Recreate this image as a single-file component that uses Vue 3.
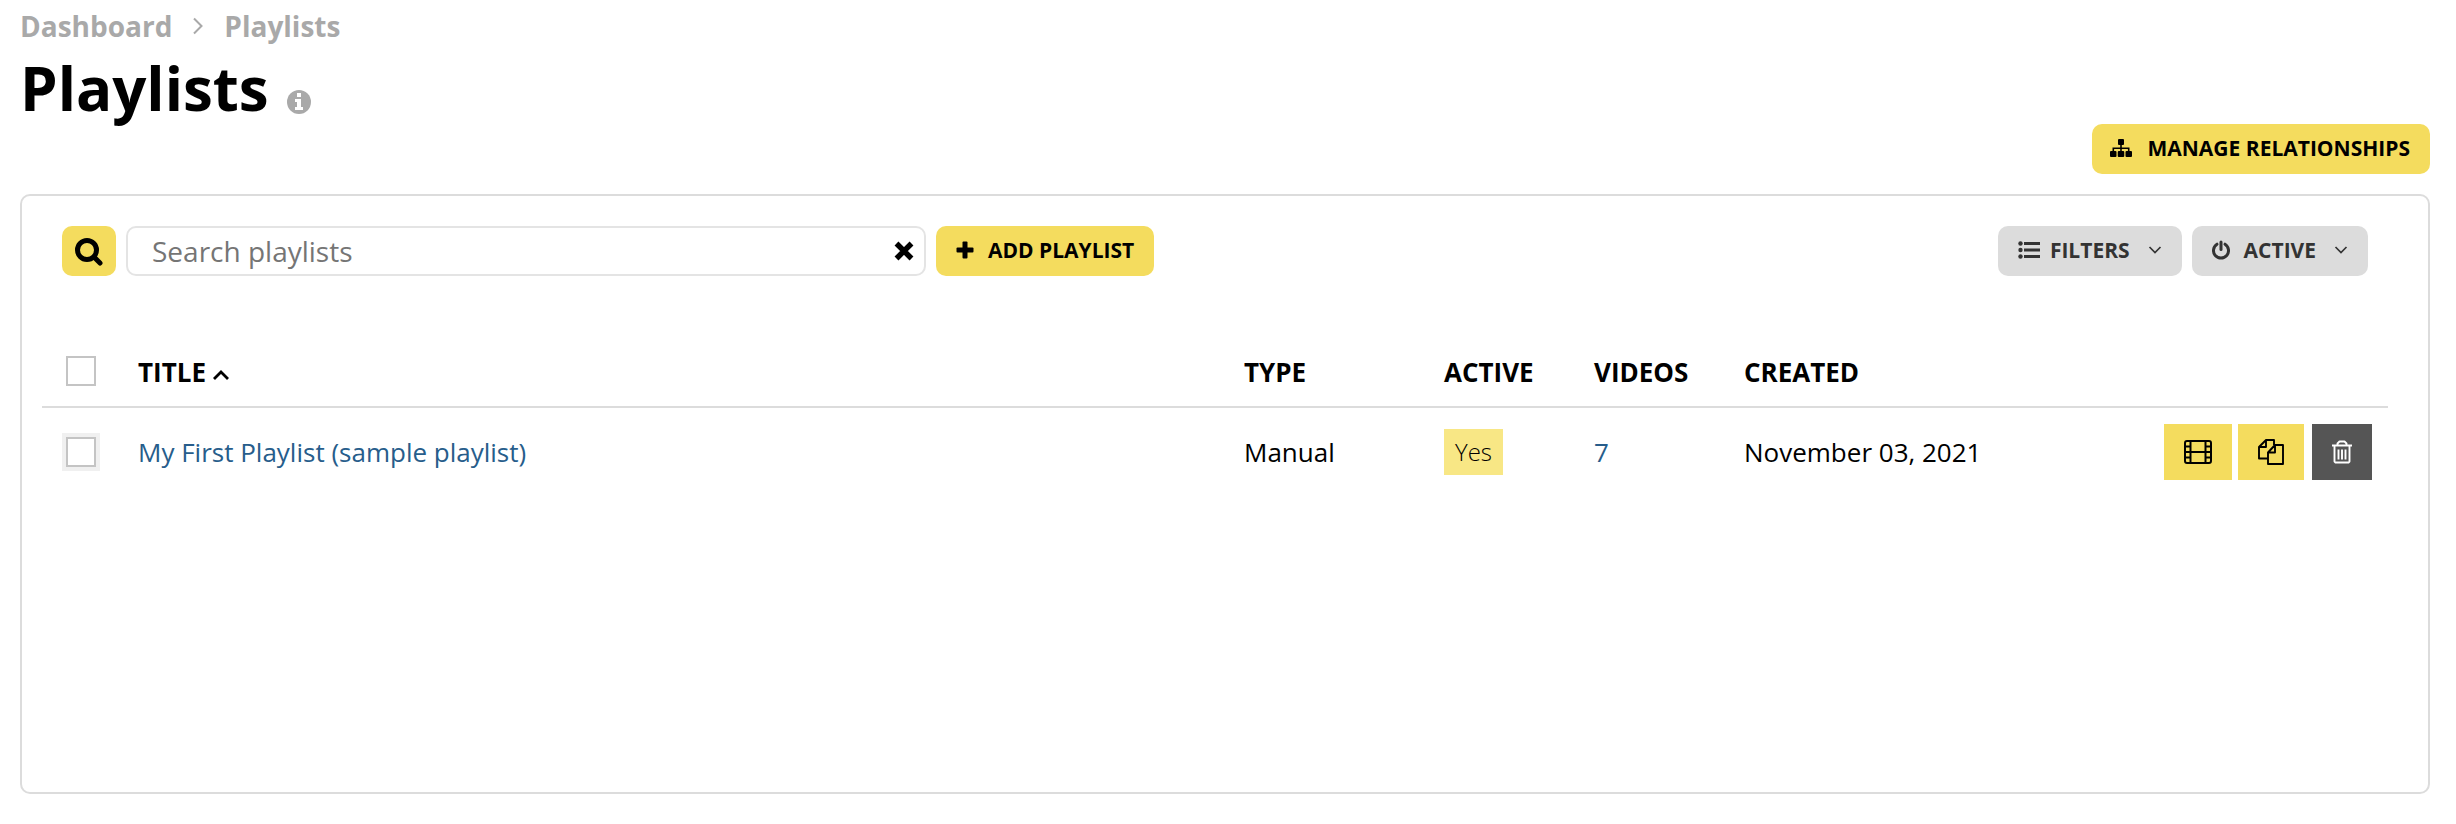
<script setup>
import { ref } from 'vue'

const search = ref('')
const allSelected = ref(false)
const playlists = ref([
  {
    id: 1,
    title: 'My First Playlist (sample playlist)',
    type: 'Manual',
    active: 'Yes',
    videos: 7,
    created: 'November 03, 2021',
    selected: false
  }
])
</script>

<template>
  <main class="page">
    <nav class="breadcrumb" aria-label="Breadcrumb">
      <a href="#">Dashboard</a>
      <svg width="12" height="18" viewBox="0 0 12 18" fill="none" stroke="currentColor" stroke-width="2"><path d="M2 1.5 9.5 9 2 16.5" /></svg>
      <a href="#">Playlists</a>
    </nav>

    <div class="heading">
      <h1>Playlists</h1>
      <svg class="info" width="24" height="24" viewBox="0 0 24 24" role="img" aria-label="Info">
        <circle cx="12" cy="12" r="12" fill="#a9a9a9" />
        <path fill="#fff" d="M10 3h4v4h-4zM8 9h6v8h2v3H8v-3h2v-5H8z" />
      </svg>
    </div>

    <div class="page-actions">
      <button class="btn yellow manage" type="button">
        <svg width="22" height="18" viewBox="0 0 22 18">
          <path fill="none" stroke="currentColor" stroke-width="1.6" d="M11 5v8M3.300 13V9.200H18.700V13" />
          <g fill="currentColor">
            <rect x="8" y="0" width="6" height="6" rx="1" />
            <rect x="0" y="12" width="6.500" height="6" rx="1" />
            <rect x="7.750" y="12" width="6.500" height="6" rx="1" />
            <rect x="15.500" y="12" width="6.500" height="6" rx="1" />
          </g>
        </svg>
        MANAGE RELATIONSHIPS
      </button>
    </div>

    <section class="card">
      <div class="toolbar">
        <button class="btn yellow search-btn" type="button" aria-label="Search">
          <svg width="28" height="28" viewBox="0 0 28 28" fill="none" stroke="currentColor">
            <circle cx="12" cy="12" r="9.500" stroke-width="5" />
            <path d="m19.500 19.500 5.500 5.500" stroke-width="5" stroke-linecap="round" />
          </svg>
        </button>
        <div class="field">
          <input v-model="search" type="text" placeholder="Search playlists" aria-label="Search playlists" />
          <button class="clear" type="button" aria-label="Clear search" @click="search = ''">
            <svg width="20" height="20" viewBox="0 0 20 20" stroke="currentColor" stroke-width="5.500"><path d="m2.500 2.500 15 15M17.500 2.500l-15 15" /></svg>
          </button>
        </div>
        <button class="btn yellow add" type="button">
          <svg width="18" height="18" viewBox="0 0 18 18" fill="currentColor">
            <rect x="6.500" y="0.500" width="5" height="17" rx="1" />
            <rect x="0.500" y="6.500" width="17" height="5" rx="1" />
          </svg>
          ADD PLAYLIST
        </button>
        <div class="menus">
          <button class="btn gray filters" type="button">
            <svg width="22" height="18" viewBox="0 0 22 18" fill="currentColor">
              <circle cx="2.500" cy="2.500" r="2.200" /><circle cx="2.500" cy="9" r="2.200" /><circle cx="2.500" cy="15.500" r="2.200" />
              <path d="M6 1h16v3H6zM6 7.500h16v3H6zM6 14h16v3H6z" />
            </svg>
            <span>FILTERS</span>
            <svg width="14" height="8" viewBox="0 0 14 8" fill="none" stroke="currentColor" stroke-width="1.700"><path d="m1.500 1 5.500 5.500L12.500 1" /></svg>
          </button>
          <button class="btn gray status" type="button">
            <svg width="18" height="20" viewBox="0 0 18 20" fill="none" stroke="currentColor" stroke-width="3" stroke-linecap="round">
              <path d="M5 4.200a7.500 7.500 0 1 0 8 0" /><path d="M9 2v7.500" />
            </svg>
            <span>ACTIVE</span>
            <svg width="14" height="8" viewBox="0 0 14 8" fill="none" stroke="currentColor" stroke-width="1.700"><path d="m1.500 1 5.500 5.500L12.500 1" /></svg>
          </button>
        </div>
      </div>

      <table>
        <colgroup>
          <col class="c-check" /><col /><col class="c-type" /><col class="c-small" /><col class="c-small" /><col class="c-created" /><col class="c-actions" />
        </colgroup>
        <thead>
          <tr>
            <th class="check"><input v-model="allSelected" type="checkbox" aria-label="Select all playlists" /></th>
            <th>
              TITLE
              <svg width="16" height="10" viewBox="0 0 16 10" fill="none" stroke="currentColor" stroke-width="2.800"><path d="m1 9 7-7 7 7" /></svg>
            </th>
            <th>TYPE</th>
            <th>ACTIVE</th>
            <th>VIDEOS</th>
            <th>CREATED</th>
            <th aria-label="Actions"></th>
          </tr>
        </thead>
        <tbody>
          <tr v-for="p in playlists" :key="p.id">
            <td class="check shaded"><input v-model="p.selected" type="checkbox" :aria-label="p.title" /></td>
            <td><a href="#">{{ p.title }}</a></td>
            <td>{{ p.type }}</td>
            <td><span class="badge">{{ p.active }}</span></td>
            <td><a href="#">{{ p.videos }}</a></td>
            <td>{{ p.created }}</td>
            <td>
              <div class="row-actions">
                <button class="sq videos" type="button" aria-label="Videos">
                  <svg width="28" height="24" viewBox="0 0 28 24" fill="none" stroke="currentColor" stroke-width="2">
                    <rect x="1" y="1" width="26" height="22" rx="2" />
                    <path d="M6.500 1v22M21.500 1v22M6.500 12h15M1 6.500h5.500M1 12h5.500M1 17.500h5.500M21.500 6.500H27M21.500 12H27M21.500 17.500H27" />
                  </svg>
                </button>
                <button class="sq copy" type="button" aria-label="Duplicate">
                  <svg width="26" height="26" viewBox="0 0 26 26" fill="none" stroke="currentColor" stroke-width="1.900" stroke-linejoin="round">
                    <path d="M9.500 19.500H1V8l7-7h8v5M1 8h7V1" />
                    <path d="M10 13.500 17 6h8v19H10zM10 13.500h7V6" />
                  </svg>
                </button>
                <button class="sq delete" type="button" aria-label="Delete">
                  <svg width="22" height="24" viewBox="0 0 22 24" fill="none" stroke="currentColor" stroke-width="1.900" stroke-linejoin="round">
                    <path d="M1 5.500h20M6.500 5V3.500l2-2h5l2 2V5M3.500 5.500V21.500l1 1h13l1-1V5.500M7.500 9.500v10M11 9.500v10M14.500 9.500v10" />
                  </svg>
                </button>
              </div>
            </td>
          </tr>
        </tbody>
      </table>
    </section>
  </main>
</template>

<style>
body {
  background: #fff;
}
</style>

<style scoped>
.page {
  box-sizing: border-box;
  min-height: 100vh;
  display: flex;
  flex-direction: column;
  padding: 8px 26px 30px 20px;
  font-family: "Open Sans", sans-serif;
  font-size: 26px;
  color: #000;
}
svg {
  display: block;
  flex: none;
}
a {
  color: #275d8b;
  text-decoration: none;
}
.breadcrumb {
  display: flex;
  align-items: center;
  gap: 20px;
  height: 36px;
  color: #a9a9a9;
  font-size: 28px;
  font-weight: 700;
}
.breadcrumb a {
  color: inherit;
}
.heading {
  display: flex;
  align-items: center;
  gap: 18px;
  height: 72px;
  padding-top: 8px;
}
h1 {
  margin: 0;
  font-size: 60px;
  line-height: 72px;
  font-weight: 700;
}
.info {
  margin-top: 28px;
}
.page-actions {
  display: flex;
  justify-content: flex-end;
  margin-bottom: 20px;
}
button {
  border: 0;
  margin: 0;
  padding: 0;
  font-family: inherit;
  cursor: pointer;
}
.btn {
  box-sizing: border-box;
  display: flex;
  align-items: center;
  height: 50px;
  padding: 0 20px 2px;
  border-radius: 10px;
  font-size: 21px;
  font-weight: 700;
  white-space: nowrap;
}
.yellow {
  background: #f4dc5e;
  color: #000;
}
.gray {
  background: #dcdcdc;
  color: #333;
}
.manage {
  gap: 16px;
  padding-left: 18px;
}
.add {
  gap: 14px;
}
.card {
  flex: 1;
  border: 2px solid #dcdcdc;
  border-radius: 10px;
  padding: 30px 40px 40px 20px;
}
.toolbar {
  display: flex;
  gap: 10px;
  padding: 0 20px;
}
.search-btn {
  width: 54px;
  padding: 2px 0 0;
  justify-content: center;
}
.field {
  box-sizing: border-box;
  flex: 0 1 800px;
  display: flex;
  align-items: center;
  height: 50px;
  padding: 0 10px 0 24px;
  border: 2px solid #e4e4e4;
  border-radius: 10px;
}
.field input {
  flex: 1;
  min-width: 0;
  padding: 0;
  border: 0;
  outline: 0;
  background: none;
  font: 28px "Open Sans", sans-serif;
}
.field input::placeholder {
  color: #757575;
}
.clear {
  background: none;
  color: #000;
}
.menus {
  display: flex;
  gap: 10px;
  margin-left: auto;
}
.filters {
  gap: 10px;
}
.filters span {
  margin-right: 8px;
}
.status {
  gap: 14px;
}
.status span {
  margin-right: 4px;
}
table {
  width: 100%;
  margin-top: 60px;
  table-layout: fixed;
  border-collapse: collapse;
}
.c-check {
  width: 96px;
}
.c-type {
  width: 200px;
}
.c-small {
  width: 150px;
}
.c-created {
  width: 400px;
}
.c-actions {
  width: 244px;
}
th,
td {
  padding: 0;
  text-align: left;
  vertical-align: middle;
  white-space: nowrap;
}
th {
  box-sizing: border-box;
  height: 71px;
  padding-top: 2px;
  border-bottom: 2px solid #dcdcdc;
}
th.check {
  padding-top: 0;
}
th svg {
  display: inline-block;
  vertical-align: middle;
}
td {
  height: 88px;
}
.check input {
  appearance: none;
  display: block;
  width: 30px;
  height: 30px;
  margin: 0 0 0 24px;
  border: 2px solid #c4c4c4;
  background: #fff;
}
.check input:checked {
  background: #f4dc5e;
}
.shaded input {
  box-shadow: 0 0 0 4px #f0f0f0;
}
.badge {
  display: inline-block;
  padding: 0 11px;
  line-height: 46px;
  background: #f8e785;
  font-size: 24px;
  font-weight: 300;
  vertical-align: middle;
}
.row-actions {
  display: flex;
  justify-content: flex-end;
  gap: 6px;
  padding-right: 16px;
}
.sq {
  display: flex;
  align-items: center;
  justify-content: center;
  height: 56px;
  background: #f4dc5e;
  color: #000;
}
.videos {
  width: 68px;
}
.copy {
  width: 66px;
  margin-right: 2px;
}
.delete {
  width: 60px;
  background: #555;
  color: #fff;
}
</style>
